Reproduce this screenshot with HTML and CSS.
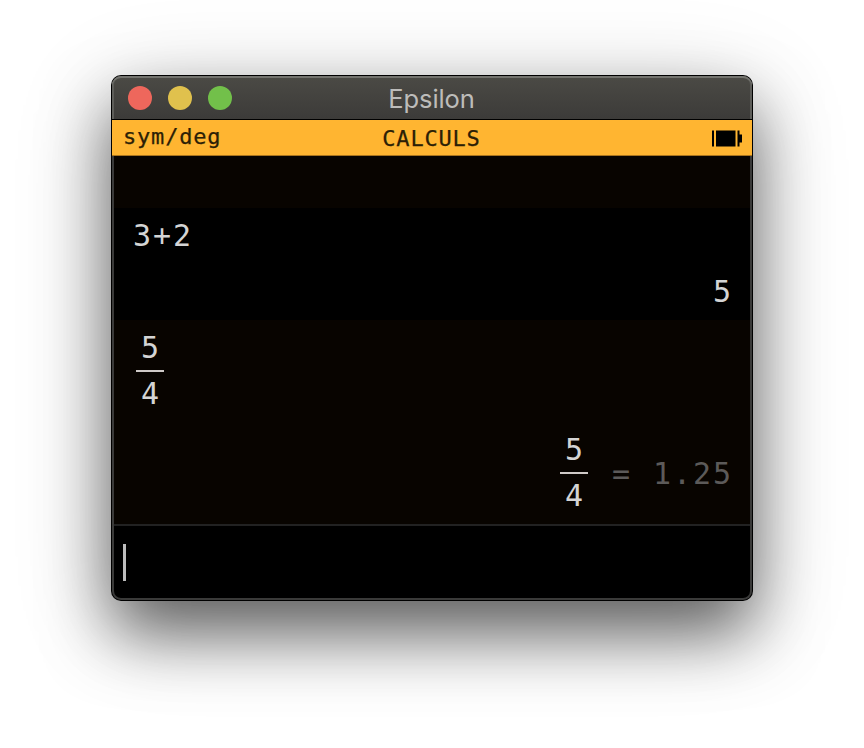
FILE: index.html
```html
<!DOCTYPE html>
<html lang="fr">
<head>
<meta charset="utf-8">
<title>Epsilon</title>
<link rel="stylesheet" href="styles.css">
</head>
<body>
<main class="window">
  <header class="titlebar">
    <div class="lights"><i class="light close"></i><i class="light minimize"></i><i class="light expand"></i></div>
    <h1 class="title">Epsilon</h1>
  </header>
  <div class="status">
    <span class="mode">sym/deg</span>
    <span class="app">CALCULS</span>
    <svg class="battery" width="31" height="17" viewBox="0 0 31 17"><path d="M1 .5h2v16H1zM5 .5h19.500v16H5zM26.500 .5h2v4H31v8h-2.500v4h-2z"/></svg>
  </div>
  <section class="history">
    <div class="spacer"></div>
    <article class="calculation dark">
      <div class="input">3+2</div>
      <div class="output">5</div>
    </article>
    <article class="calculation">
      <div class="input"><div class="fraction"><span>5</span><span class="bar"></span><span>4</span></div></div>
      <div class="output"><div class="fraction"><span>5</span><span class="bar"></span><span>4</span></div><span class="approx equals">=</span><span class="approx">1.25</span></div>
    </article>
  </section>
  <div class="entry"><span class="cursor"></span></div>
</main>
</body>
</html>
```
FILE: styles.css
```css
* { box-sizing: border-box; }
body {
  margin: 0;
  padding-top: 76px;
  height: 748px;
  background: #fff;
  overflow: hidden;
}
.window {
  position: relative;
  width: 640px;
  height: 524px;
  margin: 0 auto;
  display: flex;
  flex-direction: column;
  border-radius: 9px;
  background: #000;
  box-shadow: 0 0 0 1px #000, 0 33px 66px rgba(0, 0, 0, .56), 0 20px 100px rgba(0, 0, 0, .2);
}
.titlebar {
  height: 44px;
  flex: none;
  display: grid;
  grid-template-columns: 1fr auto 1fr;
  align-items: center;
  padding: 0 16px;
  border-bottom: 1px solid #000;
  border-radius: 9px 9px 0 0;
  background: linear-gradient(#4b4a45, #3c3b39);
  box-shadow: inset 0 2px #74746f, inset 2px 0 #5d5d59, inset -2px 0 #5d5d59;
}
.lights { display: flex; gap: 16px; }
.light { width: 24px; height: 24px; border-radius: 50%; }
.close { background: #ee675c; }
.minimize { background: #e0c14d; }
.expand { background: #72c04a; }
.title {
  margin: 3px 1px 0 0;
  font: 400 25.5px/30px Inter, "Liberation Sans", sans-serif;
  letter-spacing: -.1px;
  color: #bdbcba;
}
.status {
  height: 36px;
  flex: none;
  display: grid;
  grid-template-columns: 1fr auto 1fr;
  align-items: start;
  padding: 0 10px 0 11px;
  border-bottom: 1px solid #a9741e;
  background: #ffb531;
  color: #2c1f06;
  font: 22px/26px "DejaVu Sans Mono", monospace;
  letter-spacing: .8px;
  -webkit-text-stroke: .25px #2c1f06;
}
.mode { padding-top: 4px; }
.app { padding-top: 6px; margin-left: -2px; }
.battery { justify-self: end; margin-top: 9.500px; fill: #000; }
.history {
  flex: none;
  height: 368px;
  background: #080400;
  color: #d4d4d4;
  font: 30px/36px "DejaVu Sans Mono", monospace;
  letter-spacing: 1.94px;
}
.spacer { height: 52px; }
.calculation {
  display: flex;
  flex-direction: column;
  gap: 20px;
  padding: 10px 19px 10px 21px;
}
.dark { background: #000; }
.input { display: flex; }
.output { display: flex; justify-content: flex-end; }
.fraction {
  display: flex;
  flex-direction: column;
  align-items: center;
  width: 28px;
}
.fraction span { padding-left: 2px; }
.input .fraction { margin-left: 3px; }
.bar { width: 28px; height: 2px; margin: 4px 0; background: #cfcac7; }
.approx { margin-top: 24px; color: #5c5a59; }
.equals { margin: 24px 21px 0 24px; }
.entry {
  flex: 1;
  padding: 18px 11px;
  border-top: 2px solid #222;
  border-radius: 0 0 9px 9px;
}
.cursor { display: block; width: 3px; height: 37px; background: #bdbdbd; }
.window::after {
  content: "";
  position: absolute;
  inset: 80px 0 0;
  border: solid #3a3a39;
  border-width: 0 2px 2px;
  border-radius: 0 0 9px 9px;
}
```
